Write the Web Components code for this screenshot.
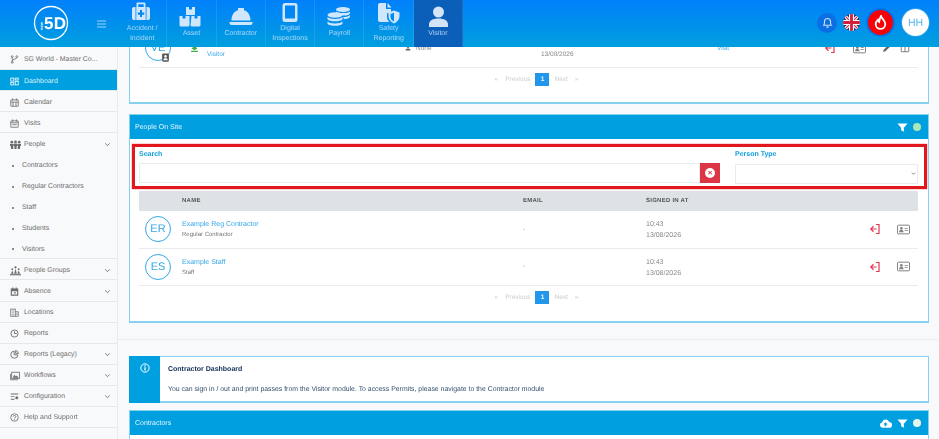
<!DOCTYPE html>
<html lang="en">
<head>
<meta charset="utf-8">
<title>Visitor Dashboard</title>
<style>
  html, body { margin: 0; height: 100%; overflow: hidden; background: #f8f9fa; }
  body { font-family: "Liberation Sans", Arial, sans-serif; text-rendering: geometricPrecision; }
</style>
</head>
<body>
<app-shell>
  <app-header slot="header"></app-header>
  <side-bar slot="sidebar"></side-bar>

  <panel-card flush style="margin-top:-18px">
    <visitor-row></visitor-row>
    <page-nav style="height:34.5px"></page-nav>
  </panel-card>

  <panel-card heading="People On Site" style="margin-top:10px">
    <icon-glyph slot="actions" name="filter" size="11" color="#fff"></icon-glyph>
    <status-dot slot="actions" color="#a9e8b8"></status-dot>
    <filter-bar></filter-bar>
    <people-head></people-head>
    <person-row initials="ER" name="Example Reg Contractor" role="Regular Contractor" time="10:43" date="13/08/2026"></person-row>
    <person-row initials="ES" name="Example Staff" role="Staff" time="10:43" date="13/08/2026"></person-row>
    <page-nav style="height:35px"></page-nav>
  </panel-card>

  <section-rule></section-rule>

  <info-card heading="Contractor Dashboard">You can sign in / out and print passes from the Visitor module. To access Permits, please navigate to the Contractor module</info-card>

  <panel-card heading="Contractors" style="margin-top:7px">
    <icon-glyph slot="actions" name="cloud" size="13" color="#fff"></icon-glyph>
    <icon-glyph slot="actions" name="filter" size="11" color="#fff"></icon-glyph>
    <status-dot slot="actions" color="#e4f7ea"></status-dot>
    <div style="height:40px"></div>
  </panel-card>
</app-shell>

<script>
  // all the small drawings live here, in a 24 box
  const ICONS = {
    filter: '<path fill="currentColor" d="M1 3h22l-8 9.500V21l-6-3v-5.500z"/>',
    cloud: '<path fill="currentColor" d="M6.500 20a5 5 0 0 1-.8-9.900 6.800 6.800 0 0 1 13-.9A5.400 5.400 0 0 1 18.500 20z"/><path fill="#009fe0" d="M12 9.500l4 4.500h-2.500v3h-3v-3H8z"/>',
    exit: '<g fill="none" stroke="currentColor" stroke-width="2.400"><path d="M14 3h6v18h-6"/><path d="M15 12H4M9 6.500 3.500 12 9 17.500"/></g>',
    card: '<rect x="1" y="4" width="22" height="16" rx="1.500" fill="none" stroke="currentColor" stroke-width="1.800"/><circle cx="8" cy="10" r="2.500" fill="currentColor"/><path fill="currentColor" d="M3.800 17c0-3 1.800-4 4.200-4s4.200 1 4.200 4zM14 9h6v1.500h-6zM14 13h6v1.500h-6z"/>',
    pencil: '<path fill="currentColor" d="M3 21l1.500-6L16 3.500l4.500 4.500L9 19.500z"/>',
    columns: '<g fill="none" stroke="currentColor" stroke-width="2"><rect x="3" y="3" width="18" height="18" rx="1"/><path d="M12 3v18M3 8h18"/></g>',
    person: '<circle cx="12" cy="7" r="5" fill="currentColor"/><path fill="currentColor" d="M2 22c0-6 4-8 10-8s10 2 10 8z"/>',
    arrow: '<path fill="currentColor" d="M12 3l8 10h-5v3H9v-3H4zM3 18h18v3H3z"/>',
    badge: '<rect x="3" y="1" width="18" height="22" rx="3" fill="currentColor"/><circle cx="12" cy="9" r="3.500" fill="#fff"/><path fill="#fff" d="M6 19c0-4 2.500-5 6-5s6 1 6 5z"/>',
    branch: '<g fill="none" stroke="currentColor" stroke-width="2.200"><circle cx="6" cy="4.500" r="2.500"/><circle cx="6" cy="19.500" r="2.500"/><circle cx="18" cy="4.500" r="2.500"/><path d="M6 7v10M18 7c0 5-12 3-12 9"/></g>',
    grid: '<g fill="none" stroke="currentColor" stroke-width="2.400"><rect x="2" y="3" width="8" height="8"/><rect x="14" y="3" width="8" height="5"/><rect x="2" y="15" width="8" height="6"/><rect x="14" y="12" width="8" height="9"/></g>',
    calendar: '<g fill="none" stroke="currentColor" stroke-width="2.200"><rect x="2" y="5" width="20" height="17" rx="1"/><path d="M7 1v6M17 1v6M2 11h20M8 11v11M16 11v11"/></g>',
    visits: '<g fill="none" stroke="currentColor" stroke-width="2.200"><rect x="2" y="5" width="20" height="17" rx="1"/><path d="M7 1v6M17 1v6M2 10h20"/><path d="M6 15h12"/></g>',
    people: '<g fill="currentColor"><circle cx="4" cy="7" r="3"/><circle cx="12" cy="6" r="3"/><circle cx="20" cy="7" r="3"/><path d="M0 11h8v4H7v7H2v-7H0zM8.500 10h7v5h-1v7h-5v-7h-1zM16 11h8v4h-2v7h-5v-7h-1z"/></g>',
    groups: '<g fill="currentColor"><path d="M0 20h24v2.500H0z"/><path d="M2 19l3-7 3 7zM9 19l3-11 3 11zM16 19l3-7 3 7z"/><circle cx="5" cy="9" r="2"/><circle cx="12" cy="5" r="2.500"/><circle cx="19" cy="9" r="2"/></g>',
    absence: '<path fill="currentColor" d="M2 4h4V1h3v3h6V1h3v3h4v19H2zm3 7v9h14v-9z"/><path fill="currentColor" d="M11 13h4v4h-4z"/>',
    building: '<g fill="none" stroke="currentColor" stroke-width="2.200"><rect x="2" y="3" width="12" height="19"/><path d="M14 10h8v12h-8M6 8h4M6 13h4M6 18h4M18 14v4"/></g>',
    clock: '<g fill="none" stroke="currentColor" stroke-width="2.400"><circle cx="12" cy="12" r="9.500"/><path d="M12 6v6h6"/></g>',
    pie: '<g fill="none" stroke="currentColor" stroke-width="2.400"><path d="M11 3a9.500 9.500 0 1 0 10 10H11z"/><path d="M15 1.500a8 8 0 0 1 7.500 7.500H15z"/></g>',
    flow: '<g fill="none" stroke="currentColor" stroke-width="2"><rect x="4" y="3" width="19" height="15"/><path d="M1 7v14h18"/></g><path fill="currentColor" d="M6 16l5-7 3 4 2-2 5 5z"/>',
    config: '<path fill="currentColor" d="M2 4h20v2.500H2zM2 11h10v2.500H2zM2 18h10v2.500H2z"/><circle cx="18" cy="15" r="4" fill="currentColor"/>',
    help: '<g fill="none" stroke="currentColor" stroke-width="2.200"><circle cx="12" cy="12" r="10"/><path d="M8.500 9.500a3.500 3 0 1 1 4.500 3c-1 .5-1 1-1 2.500"/></g><circle cx="12" cy="18" r="1.400" fill="currentColor"/>',
    chevron: '<path fill="none" stroke="currentColor" stroke-width="3" d="M4 8l8 8 8-8"/>',
    info: '<circle cx="12" cy="12" r="10" fill="none" stroke="currentColor" stroke-width="2.400"/><path fill="currentColor" d="M10.500 10h3v8h-3zM10.500 5.500h3v3h-3z"/>',
    bell: '<path fill="none" stroke="currentColor" stroke-width="2" d="M5 17c1.500-2 1.500-4 1.500-7a5.500 5.500 0 0 1 11 0c0 3 0 5 1.500 7z"/><path fill="currentColor" d="M9.500 19.500h5a2.500 2.500 0 0 1-5 0z"/>'
  };

  // header tiles, drawn in a 30x24 box
  const TILE_ICONS = {
    accident: '<path d="M9.500 7V3.500a1 1 0 0 1 1-1h7a1 1 0 0 1 1 1V7h-1.800V4.300h-5.400V7z"/><path fill-rule="evenodd" d="M7 7h1.500v13H7a2 2 0 0 1-2-2V9a2 2 0 0 1 2-2zM9.300 7h9.400v13H9.300zM19.500 7H21a2 2 0 0 1 2 2v9a2 2 0 0 1-2 2h-1.500zM13 10v2.500h-2.200v2.200H13v2.300h2v-2.300h2.200v-2.200H15V10z"/>',
    asset: '<path d="M10 7h3v2.500h3V7h3v8h-9zM3.500 16h3v2.500h3V16h4v9a1.500 1.500 0 0 1-1.500 1.500H5A1.500 1.500 0 0 1 3.500 25zM15.500 16h3v2.500h3V16h3v9a1.500 1.500 0 0 1-1.500 1.500h-7a1.500 1.500 0 0 1-1.500-1.500z"/>',
    contractor: '<path d="M5.500 20.500c0-5.500 2.500-9 6.500-10.200V8h6v2.300c4 1.200 6.500 4.700 6.500 10.200zM3.500 22h23v1a2 2 0 0 1-2 2h-19a2 2 0 0 1-2-2z"/>',
    digital: '<path fill-rule="evenodd" d="M10 3h10a2.500 2.500 0 0 1 2.500 2.500v14A2.500 2.500 0 0 1 20 22H10a2.500 2.500 0 0 1-2.500-2.500v-14A2.500 2.500 0 0 1 10 3zm0 2.500v13h10v-13z"/>',
    payroll: '<ellipse cx="19" cy="9.500" rx="7" ry="2.600"/><path d="M12 11.500c2 2 12 2 14 0v2c-1 2-6 2.300-8 2-1-1-4-1.500-6-1.500zM19 17c3 0 6-.5 7-2v2c-1 1.500-3.500 2-6 2z"/><ellipse cx="11" cy="15" rx="7.500" ry="2.800"/><path d="M3.500 17c2 2.500 13 2.500 15 0v2.300c-2 2.700-13 2.700-15 0zM3.500 21.500c2 2.500 13 2.500 15 0v2.300c-2 2.700-13 2.700-15 0z"/>',
    safety: '<path d="M4 5a2 2 0 0 1 2-2h6v6h5v3l-4 1.500V17c0 2 1 4 2.500 5H6a2 2 0 0 1-2-2zM13.500 3l4 4.500h-4z"/><path fill-rule="evenodd" d="M20 10.500l5.500 2v4c0 3-2.500 5.500-5.500 7-3-1.500-5.500-4-5.500-7v-4zm0 2.200l-3.500 1.200v3c0 2 1.500 3.500 3.500 4.600z"/>',
    visitor: '<circle cx="15.500" cy="12" r="5.500"/><path d="M6 27v-2.500c0-4 4-6 9.500-6s9.500 2 9.500 6V27z"/>'
  };

  class IconGlyph extends HTMLElement {
    connectedCallback() {
      const size = this.getAttribute('size') || 9;
      const color = this.getAttribute('color') || 'currentColor';
      this.attachShadow({ mode: 'open' }).innerHTML = `
        <style>
          :host { display: inline-flex; width: ${size}px; height: ${size}px; color: ${color}; flex: none; }
          svg { width: 100%; height: 100%; display: block; }
        </style>
        <svg viewBox="0 0 24 24" aria-hidden="true">${ICONS[this.getAttribute('name')]}</svg>`;
    }
  }

  class StatusDot extends HTMLElement {
    connectedCallback() {
      this.attachShadow({ mode: 'open' }).innerHTML = `
        <style>
          :host { display: block; width: 8px; height: 8px; border-radius: 50%; background: ${this.getAttribute('color')}; }
        </style>`;
    }
  }

  class AppShell extends HTMLElement {
    constructor() {
      super();
      this.attachShadow({ mode: 'open' }).innerHTML = `
        <style>
          :host { display: flex; flex-direction: column; height: 439px; overflow: hidden; filter: blur(.3px); }
          .below { display: flex; flex: 1; min-height: 0; }
          main { flex: 1; min-width: 0; overflow: hidden; padding: 0 10px 0 11px; }
        </style>
        <slot name="header"></slot>
        <div class="below">
          <slot name="sidebar"></slot>
          <main><slot></slot></main>
        </div>`;
    }
  }

  class NavTile extends HTMLElement {
    connectedCallback() {
      const active = this.hasAttribute('active');
      this.attachShadow({ mode: 'open' }).innerHTML = `
        <style>
          :host {
            display: flex; flex-direction: column; align-items: center;
            width: 49.300px; height: 47px; box-sizing: border-box;
            border-right: 1px solid rgba(255,255,255,.1);
            background: ${active ? '#0b5fb8' : 'transparent'};
            color: ${active ? '#d4e4f7' : '#cfe6fc'};
          }
          svg { width: 30px; height: 24px; overflow: visible; fill: currentColor; display: block; flex: none; }
          .label { height: 20px; display: flex; align-items: center; text-align: center; font-size: 7px; line-height: 10px; opacity: .8; }
        </style>
        <svg viewBox="0 0 30 24" aria-hidden="true">${TILE_ICONS[this.getAttribute('icon')]}</svg>
        <div class="label"><span><slot></slot></span></div>`;
    }
  }

  class AppHeader extends HTMLElement {
    constructor() {
      super();
      this.attachShadow({ mode: 'open' }).innerHTML = `
        <style>
          :host {
            display: flex; height: 47px; flex: none; position: relative; z-index: 2;
            background: linear-gradient(#0080fb, #009fde);
          }
          .brand { width: 118px; flex: none; display: flex; align-items: center; box-sizing: border-box; padding-left: 33px; }
          .logo { width: 36px; height: 36px; display: block; margin-top: -1px; }
          .logo text { font-family: "Liberation Sans", sans-serif; fill: #fff; }
          .burger { margin-left: 28px; width: 9px; height: 8px; display: flex; flex-direction: column; justify-content: space-between; }
          .burger i { display: block; height: 2px; background: rgba(255,255,255,.3); }
          nav { display: flex; }
          .tools { margin-left: auto; display: flex; align-items: center; padding: 0 10px 2px 0; }
          .bell { width: 20px; height: 20px; border-radius: 50%; background: #0a6fe3; display: flex; align-items: center; justify-content: center; color: #cfe4fb; }
          .flag { width: 17px; height: 17px; border-radius: 50%; margin-left: 6px; display: block; }
          .fire { width: 25px; height: 25px; border-radius: 50%; background: #f70006; margin-left: 8px; display: flex; align-items: center; justify-content: center; box-shadow: 0 0 0 2px rgba(0,90,230,.5); }
          .user { width: 27px; height: 27px; border-radius: 50%; background: #fff; margin-left: 9px; display: flex; align-items: center; justify-content: center; color: #5ab6f0; font-size: 10.500px; box-shadow: 0 0 0 1px rgba(60,170,240,.6); }
        </style>
        <div class="brand">
          <svg class="logo" viewBox="0 0 36 36" aria-label="5D logo">
            <circle cx="18" cy="18" r="16.500" fill="none" stroke="#fff" stroke-width="1.300"/>
            <text x="11" y="24" font-size="17" font-weight="700" textLength="22">5D</text>
            <text x="9.500" y="25" font-size="4" font-weight="700" transform="rotate(-90 9.500 25)">new</text>
          </svg>
          <div class="burger"><i></i><i></i><i></i></div>
        </div>
        <nav>
          <nav-tile icon="accident">Accident /<br>Incident</nav-tile>
          <nav-tile icon="asset">Asset</nav-tile>
          <nav-tile icon="contractor">Contractor</nav-tile>
          <nav-tile icon="digital">Digital<br>Inspections</nav-tile>
          <nav-tile icon="payroll">Payroll</nav-tile>
          <nav-tile icon="safety">Safety<br>Reporting</nav-tile>
          <nav-tile icon="visitor" active>Visitor</nav-tile>
        </nav>
        <div class="tools">
          <div class="bell"><icon-glyph name="bell" size="13"></icon-glyph></div>
          <svg class="flag" viewBox="0 0 24 24" aria-label="English">
            <rect width="24" height="24" fill="#27356f"/>
            <path d="M0 0l24 24M24 0L0 24" stroke="#fff" stroke-width="4.500"/>
            <path d="M0 0l24 24M24 0L0 24" stroke="#d3203a" stroke-width="1.500"/>
            <path d="M12 0v24M0 12h24" stroke="#fff" stroke-width="7"/>
            <path d="M12 0v24M0 12h24" stroke="#d3203a" stroke-width="4"/>
          </svg>
          <div class="fire">
            <svg width="13" height="15" viewBox="0 0 24 28" aria-hidden="true"><path fill="none" stroke="#fff" stroke-width="3.400" d="M13 2c1 5 8 8 8 15a9 9 0 0 1-18 0c0-4 2-6 4-8 .5 2 1 3 2.500 4C10 9 11 5 13 2z"/></svg>
          </div>
          <div class="user">HH</div>
        </div>`;
    }
  }

  class SideItem extends HTMLElement {
    connectedCallback() {
      const sub = this.hasAttribute('sub');
      const active = this.hasAttribute('active');
      const icon = this.getAttribute('icon');
      const iconSize = this.getAttribute('icon-size') || 9;
      this.attachShadow({ mode: 'open' }).innerHTML = `
        <style>
          :host {
            display: flex; align-items: center; height: 21.050px; box-sizing: border-box; flex: none;
            font-size: 6.900px; white-space: nowrap; padding: 2px 6px 0 0;
            color: ${active ? '#dff3fb' : '#6c6c6c'};
            background: ${active ? '#00a0e0' : 'transparent'};
            border-bottom: ${sub ? '0' : '1px solid #e6e8eb'};
          }
          .lead { width: 24px; flex: none; display: flex; justify-content: flex-start; padding-left: 10px; box-sizing: border-box; }
          .dot { width: 2px; height: 2px; border-radius: 50%; background: #666; margin: 0 0 0 2px; }
          .text { flex: 1; ${sub ? 'margin-left: -2px;' : ''} }
        </style>
        <div class="lead">${sub ? '<div class="dot"></div>' : `<icon-glyph name="${icon}" size="${iconSize}"></icon-glyph>`}</div>
        <div class="text"><slot></slot></div>
        ${this.hasAttribute('more') ? '<icon-glyph name="chevron" size="7"></icon-glyph>' : ''}`;
    }
  }

  class SideBar extends HTMLElement {
    constructor() {
      super();
      this.attachShadow({ mode: 'open' }).innerHTML = `
        <style>
          :host { display: flex; flex-direction: column; width: 118px; flex: none; box-sizing: border-box; background: #f8f9fa; border-right: 1px solid #e8eaed; }
          side-item.top { height: 23px; }
        </style>
        <side-item class="top" icon="branch">SG World - Master Co...</side-item>
        <side-item active icon="grid">Dashboard</side-item>
        <side-item icon="calendar">Calendar</side-item>
        <side-item icon="visits">Visits</side-item>
        <side-item icon="people" icon-size="11" more style="border-bottom:0">People</side-item>
        <side-item sub>Contractors</side-item>
        <side-item sub>Regular Contractors</side-item>
        <side-item sub>Staff</side-item>
        <side-item sub>Students</side-item>
        <side-item sub style="border-bottom:1px solid #e6e8eb">Visitors</side-item>
        <side-item icon="groups" icon-size="11" more>People Groups</side-item>
        <side-item icon="absence" more>Absence</side-item>
        <side-item icon="building">Locations</side-item>
        <side-item icon="clock">Reports</side-item>
        <side-item icon="pie" more>Reports (Legacy)</side-item>
        <side-item icon="flow" icon-size="10" more>Workflows</side-item>
        <side-item icon="config" more>Configuration</side-item>
        <side-item icon="help">Help and Support</side-item>`;
    }
  }

  class PanelCard extends HTMLElement {
    connectedCallback() {
      const heading = this.getAttribute('heading');
      this.attachShadow({ mode: 'open' }).innerHTML = `
        <style>
          :host { display: block; background: #fff; border: 1px solid #86d0f0; border-bottom-width: 2px; box-sizing: border-box; }
          header { height: 24px; background: #009fe0; color: #e3f4fc; font-size: 7px; display: flex; align-items: center; padding: 0 7px 0 5px; margin-bottom: 1px; }
          .actions { margin-left: auto; display: flex; align-items: center; gap: 5px; }
          ::slotted(*) { flex: none; }
        </style>
        ${heading ? `<header><span>${heading}</span><div class="actions"><slot name="actions"></slot></div></header>` : ''}
        <slot></slot>`;
    }
  }

  class FilterBar extends HTMLElement {
    constructor() {
      super();
      this.attachShadow({ mode: 'open' }).innerHTML = `
        <style>
          :host {
            display: grid; grid-template-columns: 581px 183px; column-gap: 15px; box-sizing: border-box;
            margin: 5px 1px 2px 2px; height: 45px; padding: 4px 5px 0 4px;
            border: 3px solid #e2161d; box-shadow: 0 0 1px #e2161d;
          }
          label { display: block; height: 12px; line-height: 7px; font-size: 7px; font-weight: 700; color: #10a0dc; }
          .with-button { display: flex; height: 20px; }
          .pick { position: relative; height: 20px; }
          .pick icon-glyph { position: absolute; right: 2px; top: 8px; }
          input, select { box-sizing: border-box; height: 20px; border: 1px solid #e9ecef; background: #fff; width: 100%; margin: 0; padding: 0; font: inherit; border-radius: 0; outline: 0; }
          input { flex: 1; min-width: 0; }
          select { font-size: 7px; color: #555; appearance: none; -webkit-appearance: none; }
          button { width: 20px; height: 20px; flex: none; padding: 0; border: 0; background: #dc3545; display: flex; align-items: center; justify-content: center; }
          button i { width: 10px; height: 10px; border-radius: 50%; background: #fff; color: #dc3545; font: 700 8px/10px "Liberation Sans", sans-serif; text-align: center; }
        </style>
        <div>
          <label>Search</label>
          <div class="with-button"><input type="text" aria-label="Search"><button aria-label="Clear"><i>×</i></button></div>
        </div>
        <div>
          <label>Person Type</label>
          <div class="pick">
            <select aria-label="Person Type"><option></option></select>
            <icon-glyph name="chevron" size="5" color="#444"></icon-glyph>
          </div>
        </div>`;
    }
  }

  const ROW_CSS = `
    :host {
      display: grid; grid-template-columns: 43px 341px 123px 215px 28px 28px; align-items: center;
      margin: 0 10px 0 9px; box-sizing: border-box;
    }`;

  class PeopleHead extends HTMLElement {
    constructor() {
      super();
      this.attachShadow({ mode: 'open' }).innerHTML = `
        <style>${ROW_CSS}
          :host { height: 20px; background: #dee2e6; font-size: 6px; font-weight: 700; color: #555; letter-spacing: .25px; }
        </style>
        <span></span><span>NAME</span><span>EMAIL</span><span>SIGNED IN AT</span>`;
    }
  }

  class PersonAvatar extends HTMLElement {
    connectedCallback() {
      this.attachShadow({ mode: 'open' }).innerHTML = `
        <style>
          :host {
            display: flex; align-items: center; justify-content: center; position: relative;
            width: 26px; height: 26px; box-sizing: border-box; margin-left: 6px;
            border: 1px solid #35a7e8; border-radius: 50%; color: #35a7e8; font-size: 11px;
          }
        </style>
        <span>${this.getAttribute('initials')}</span><slot></slot>`;
    }
  }

  class PersonRow extends HTMLElement {
    connectedCallback() {
      const get = n => this.getAttribute(n);
      this.attachShadow({ mode: 'open' }).innerHTML = `
        <style>${ROW_CSS}
          :host { height: 37.500px; border-bottom: 1px solid #e9ecef; color: #777; font-size: 7px; }
          .stack { padding-top: 2px; }
          .stack div { line-height: 11px; }
          .name { color: #35a7e8; font-size: 7px; }
          .role { font-size: 6px; color: #777; }
          .date { color: #888; font-size: 7px; }
          .dash { color: #999; }
          icon-glyph { justify-self: center; }
        </style>
        <person-avatar initials="${get('initials')}"></person-avatar>
        <div class="stack"><div class="name">${get('name')}</div><div class="role">${get('role')}</div></div>
        <span class="dash">-</span>
        <div class="stack date"><div>${get('time')}</div><div>${get('date')}</div></div>
        <icon-glyph name="exit" size="12" color="#e03a4e"></icon-glyph>
        <icon-glyph name="card" size="13" color="#808080"></icon-glyph>`;
    }
  }

  // the row that is half hidden under the header
  class VisitorRow extends HTMLElement {
    constructor() {
      super();
      this.attachShadow({ mode: 'open' }).innerHTML = `
        <style>
          :host {
            display: grid; grid-template-columns: 43px 25px 198px 136px 176px 99px 28px 30px 24px 14px; align-items: center;
            height: 37.500px; margin: 0 10px 0 9px; border-bottom: 1px solid #e9ecef; box-sizing: border-box;
            font-size: 6.500px; color: #888;
          }
          .visitor { color: #35a7e8; align-self: end; padding-bottom: 8px; line-height: 8px; }
          .date { align-self: end; padding-bottom: 8px; line-height: 8px; }
          .none { display: flex; align-items: center; gap: 5px; }
          .visit { color: #35a7e8; }
          icon-glyph { justify-self: center; }
        </style>
        <person-avatar initials="VE"><icon-glyph name="badge" size="9" color="#555" style="position:absolute;left:15px;top:17px"></icon-glyph></person-avatar>
        <icon-glyph name="arrow" size="9" color="#3fae49"></icon-glyph>
        <span class="visitor">Visitor</span>
        <span class="none"><icon-glyph name="person" size="6" color="#666"></icon-glyph>None</span>
        <span class="date">13/08/2026</span>
        <span class="visit">Visit</span>
        <icon-glyph name="exit" size="12" color="#e03a4e"></icon-glyph>
        <icon-glyph name="card" size="13" color="#808080"></icon-glyph>
        <icon-glyph name="pencil" size="9" color="#666"></icon-glyph>
        <icon-glyph name="columns" size="10" color="#666"></icon-glyph>`;
    }
  }

  class PageNav extends HTMLElement {
    constructor() {
      super();
      this.attachShadow({ mode: 'open' }).innerHTML = `
        <style>
          :host { display: flex; align-items: flex-start; justify-content: center; gap: 5px; padding: 5px 0 0 15px; box-sizing: border-box; font-size: 6.500px; color: #ccc; }
          span { line-height: 13px; }
          .current { width: 14px; height: 13px; background: #2196ea; color: #eaf5fd; text-align: center; font-weight: 700; }
        </style>
        <span>«</span><span style="margin-left:2px">Previous</span><span class="current">1</span><span>Next</span><span style="margin-left:2px">»</span>`;
    }
  }

  class SectionRule extends HTMLElement {
    constructor() {
      super();
      this.attachShadow({ mode: 'open' }).innerHTML = `
        <style>:host { display: block; margin: 16px -10px 16px -11px; height: 1px; background: #eceef0; }</style>`;
    }
  }

  class InfoCard extends HTMLElement {
    connectedCallback() {
      this.attachShadow({ mode: 'open' }).innerHTML = `
        <style>
          :host { display: flex; height: 47px; box-sizing: border-box; background: #fff; border: 1px solid #86d0f0; border-bottom-width: 2px; }
          .side { width: 31px; flex: none; background: #009fe0; display: flex; justify-content: center; padding-top: 7px; box-sizing: border-box; margin: -1px 0 -2px -1px; }
          .copy { padding: 0 0 0 8px; font-size: 6.900px; color: #33506e; }
          h4 { margin: 8px 0 0; font-size: 7px; line-height: 9px; font-weight: 700; color: #15305a; }
          p { margin: 11px 0 0; line-height: 9px; }
        </style>
        <div class="side"><icon-glyph name="info" size="10" color="#fff"></icon-glyph></div>
        <div class="copy"><h4>${this.getAttribute('heading')}</h4><p><slot></slot></p></div>`;
    }
  }

  customElements.define('icon-glyph', IconGlyph);
  customElements.define('status-dot', StatusDot);
  customElements.define('nav-tile', NavTile);
  customElements.define('app-header', AppHeader);
  customElements.define('side-item', SideItem);
  customElements.define('side-bar', SideBar);
  customElements.define('panel-card', PanelCard);
  customElements.define('filter-bar', FilterBar);
  customElements.define('people-head', PeopleHead);
  customElements.define('person-avatar', PersonAvatar);
  customElements.define('person-row', PersonRow);
  customElements.define('visitor-row', VisitorRow);
  customElements.define('page-nav', PageNav);
  customElements.define('section-rule', SectionRule);
  customElements.define('info-card', InfoCard);
  customElements.define('app-shell', AppShell);
</script>
</body>
</html>
